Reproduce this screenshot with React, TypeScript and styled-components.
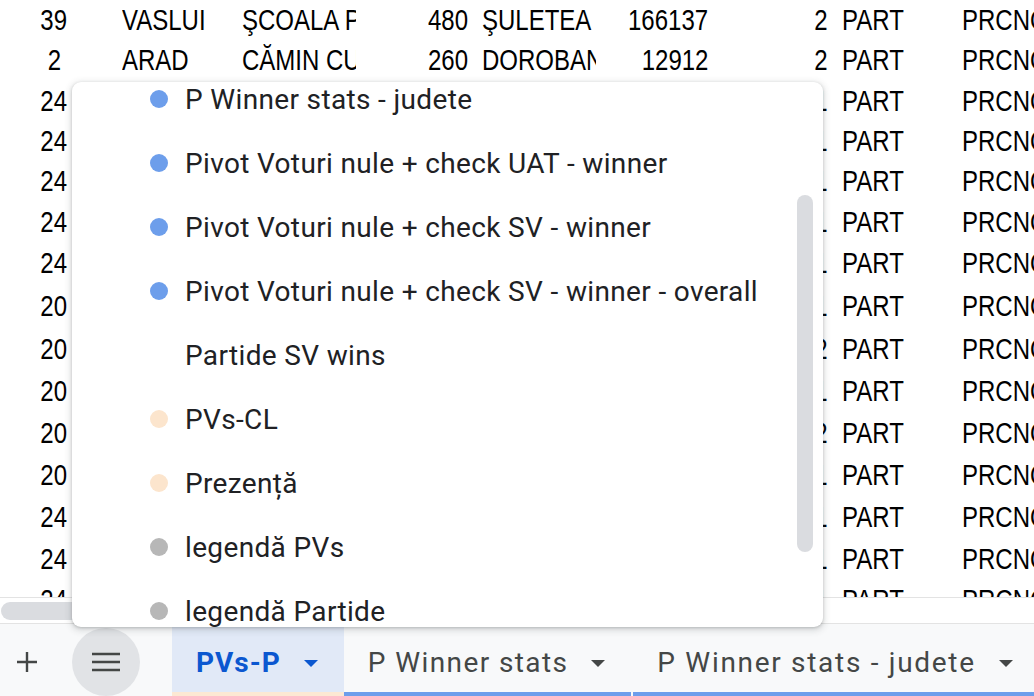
import React from "react";
import styled, { createGlobalStyle } from "styled-components";

const Global = createGlobalStyle`
  html, body { margin: 0; padding: 0; background: #fff; }
  body { width: 1034px; height: 696px; overflow: hidden; }
  #root { width: 1034px; height: 696px; }
`;

const Page = styled.div`
  position: relative;
  width: 1034px;
  height: 696px;
  display: flex;
  flex-direction: column;
  overflow: hidden;
  background: #fff;
`;

const Grid = styled.div`
  height: 597px;
  flex: none;
  overflow: hidden;
  border-bottom: 1px solid #e3e3e3;
`;

const Row = styled.div<{ $h: number }>`
  display: grid;
  grid-template-columns: 116px 120px 120px 120px 120px 120px 120px 120px 120px;
  height: ${(p) => p.$h}px;
  align-items: center;
`;

type Align = "left" | "right" | "center";

const Cell = styled.div<{ $align: Align }>`
  overflow: hidden;
  white-space: nowrap;
  height: 40px;
  text-align: ${(p) => p.$align};
  padding: ${(p) => (p.$align === "left" ? "0 0 0 6px" : "0 8px 0 0")};
`;

const CellText = styled.span<{ $align: Align }>`
  display: inline-block;
  font-family: "Liberation Sans", Arial, sans-serif;
  font-size: 30px;
  line-height: 40px;
  color: #000;
  transform: scaleX(0.8);
  transform-origin: ${(p) => p.$align} center;
`;

const Track = styled.div`
  height: 25px;
  flex: none;
  border-bottom: 1px solid #e3e3e3;
  display: flex;
  align-items: center;
  padding-left: 1px;
`;

const Thumb = styled.div`
  width: 420px;
  height: 18px;
  border-radius: 9px;
  background: #dadce0;
`;

const Bar = styled.div`
  flex: 1;
  display: flex;
  align-items: stretch;
  background: #f8f9fa;
  overflow: hidden;
`;

const PlusBtn = styled.div`
  flex: none;
  width: 54px;
  display: flex;
  align-items: center;
  justify-content: center;
  padding-top: 4px;
  margin-right: 18px;
`;

const MenuBtn = styled.div`
  flex: none;
  width: 68px;
  height: 68px;
  margin-top: 4px;
  border-radius: 50%;
  background: #e1e3e6;
  display: flex;
  align-items: center;
  justify-content: center;
  margin-right: 32px;
`;

const Tab = styled.div<{ $active?: boolean; $stripe: string; $gap?: number; $ls: number }>`
  flex: none;
  display: flex;
  align-items: center;
  padding: 8px 26px 0 24px;
  margin-left: ${(p) => p.$gap ?? 0}px;
  background: ${(p) => (p.$active ? "#e1e9f7" : "transparent")};
  border-bottom: 4px solid ${(p) => p.$stripe};
  font-family: Roboto, "Noto Sans", sans-serif;
  font-size: 28px;
  letter-spacing: ${(p) => p.$ls}px;
  font-weight: ${(p) => (p.$active ? 700 : 400)};
  color: ${(p) => (p.$active ? "#0b57d0" : "#444746")};
  white-space: nowrap;
`;

const Caret = styled.span<{ $color: string }>`
  display: inline-block;
  width: 0;
  height: 0;
  margin-left: 23px;
  border-left: 7px solid transparent;
  border-right: 7px solid transparent;
  border-top: 7px solid ${(p) => p.$color};
  margin-top: 2px;
`;

const Menu = styled.div`
  position: absolute;
  left: 72px;
  top: 82px;
  width: 751px;
  height: 545px;
  background: #fff;
  border-radius: 9px;
  box-shadow: 0 2px 6px 2px rgba(60, 64, 67, 0.15), 0 1px 3px rgba(60, 64, 67, 0.25);
  overflow: hidden;
`;

const MenuList = styled.div`
  margin-top: -15px;
  display: flex;
  flex-direction: column;
`;

const Item = styled.div`
  height: 64px;
  display: flex;
  align-items: center;
  padding-left: 78px;
  font-family: Roboto, "Noto Sans", sans-serif;
  font-size: 28px;
  letter-spacing: 0.35px;
  color: #202124;
  white-space: nowrap;
`;

const Dot = styled.span<{ $color?: string }>`
  width: 18px;
  height: 18px;
  border-radius: 50%;
  background: ${(p) => p.$color ?? "transparent"};
  margin-right: 17px;
  flex: none;
`;

const MenuScroll = styled.div`
  position: absolute;
  left: 725px;
  top: 113px;
  width: 16px;
  height: 357px;
  border-radius: 8px;
  background: #dadce0;
`;

type R = [string, string, string, string, string, string, string, string, string];

const rows: { h: number; c: R }[] = [
  { h: 40, c: ["39", "VASLUI", "ŞCOALA PRIMARĂ", "480", "ŞULETEA", "166137", "2", "PART", "PRCNOM"] },
  { h: 40, c: ["2", "ARAD", "CĂMIN CULTURAL", "260", "DOROBANŢI", "12912", "2", "PART", "PRCNOM"] },
  { h: 41, c: ["24", "MARAMUREŞ", "ŞCOALA GIMNAZIALĂ", "120", "BAIA MARE", "106568", "1", "PART", "PRCNOM"] },
  { h: 40, c: ["24", "MARAMUREŞ", "ŞCOALA GIMNAZIALĂ", "121", "BAIA MARE", "106568", "1", "PART", "PRCNOM"] },
  { h: 40, c: ["24", "MARAMUREŞ", "LICEUL TEORETIC", "122", "BAIA MARE", "106568", "1", "PART", "PRCNOM"] },
  { h: 41, c: ["24", "MARAMUREŞ", "COLEGIUL NAŢIONAL", "123", "BAIA MARE", "106568", "1", "PART", "PRCNOM"] },
  { h: 42, c: ["24", "MARAMUREŞ", "GRĂDINIŢA", "124", "BAIA MARE", "106568", "1", "PART", "PRCNOM"] },
  { h: 43, c: ["20", "IAŞI", "ŞCOALA GIMNAZIALĂ", "301", "IAŞI", "95060", "1", "PART", "PRCNOM"] },
  { h: 43, c: ["20", "IAŞI", "LICEUL TEORETIC", "302", "IAŞI", "95060", "2", "PART", "PRCNOM"] },
  { h: 42, c: ["20", "IAŞI", "COLEGIUL NAŢIONAL", "303", "IAŞI", "95060", "1", "PART", "PRCNOM"] },
  { h: 42, c: ["20", "IAŞI", "CĂMIN CULTURAL", "304", "IAŞI", "95060", "2", "PART", "PRCNOM"] },
  { h: 42, c: ["20", "IAŞI", "ŞCOALA PRIMARĂ", "305", "IAŞI", "95060", "1", "PART", "PRCNOM"] },
  { h: 42, c: ["24", "MARAMUREŞ", "ŞCOALA GIMNAZIALĂ", "125", "BAIA MARE", "106568", "1", "PART", "PRCNOM"] },
  { h: 41, c: ["24", "MARAMUREŞ", "LICEUL TEORETIC", "126", "BAIA MARE", "106568", "1", "PART", "PRCNOM"] },
  { h: 42, c: ["24", "MARAMUREŞ", "GRĂDINIŢA", "127", "BAIA MARE", "106568", "1", "PART", "PRCNOM"] },
];

const aligns: Align[] = ["center", "left", "left", "right", "left", "right", "right", "left", "left"];

const items: { label: string; color?: string }[] = [
  { label: "P Winner stats - judete", color: "#6d9eeb" },
  { label: "Pivot Voturi nule + check UAT - winner", color: "#6d9eeb" },
  { label: "Pivot Voturi nule + check SV - winner", color: "#6d9eeb" },
  { label: "Pivot Voturi nule + check SV - winner - overall", color: "#6d9eeb" },
  { label: "Partide SV wins" },
  { label: "PVs-CL", color: "#fce5cd" },
  { label: "Prezență", color: "#fce5cd" },
  { label: "legendă PVs", color: "#b7b7b7" },
  { label: "legendă Partide", color: "#b7b7b7" },
];

export default function App() {
  return (
    <Page>
      <Global />
      <Grid>
        {rows.map((r, i) => (
          <Row key={i} $h={r.h}>
            {r.c.map((v, j) => (
              <Cell key={j} $align={aligns[j]}>
                <CellText $align={aligns[j]}>{v}</CellText>
              </Cell>
            ))}
          </Row>
        ))}
      </Grid>
      <Track>
        <Thumb />
      </Track>
      <Bar>
        <PlusBtn>
          <svg width="22" height="22" viewBox="0 0 22 22">
            <path d="M11 1v20M1 11h20" stroke="#444746" strokeWidth="2.4" />
          </svg>
        </PlusBtn>
        <MenuBtn>
          <svg width="28" height="20" viewBox="0 0 28 20">
            <path d="M0 2h28M0 10h28M0 18h28" stroke="#444746" strokeWidth="2.6" />
          </svg>
        </MenuBtn>
        <Tab $active $stripe="#fce8d3" $ls={1}>
          PVs-P
          <Caret $color="#0b57d0" />
        </Tab>
        <Tab $stripe="#6d9eeb" $ls={1.4}>
          P Winner stats
          <Caret $color="#444746" />
        </Tab>
        <Tab $stripe="#6d9eeb" $gap={2} $ls={1.7}>
          P Winner stats - judete
          <Caret $color="#444746" />
        </Tab>
      </Bar>
      <Menu>
        <MenuList>
          {items.map((it) => (
            <Item key={it.label}>
              <Dot $color={it.color} />
              {it.label}
            </Item>
          ))}
        </MenuList>
        <MenuScroll />
      </Menu>
    </Page>
  );
}
